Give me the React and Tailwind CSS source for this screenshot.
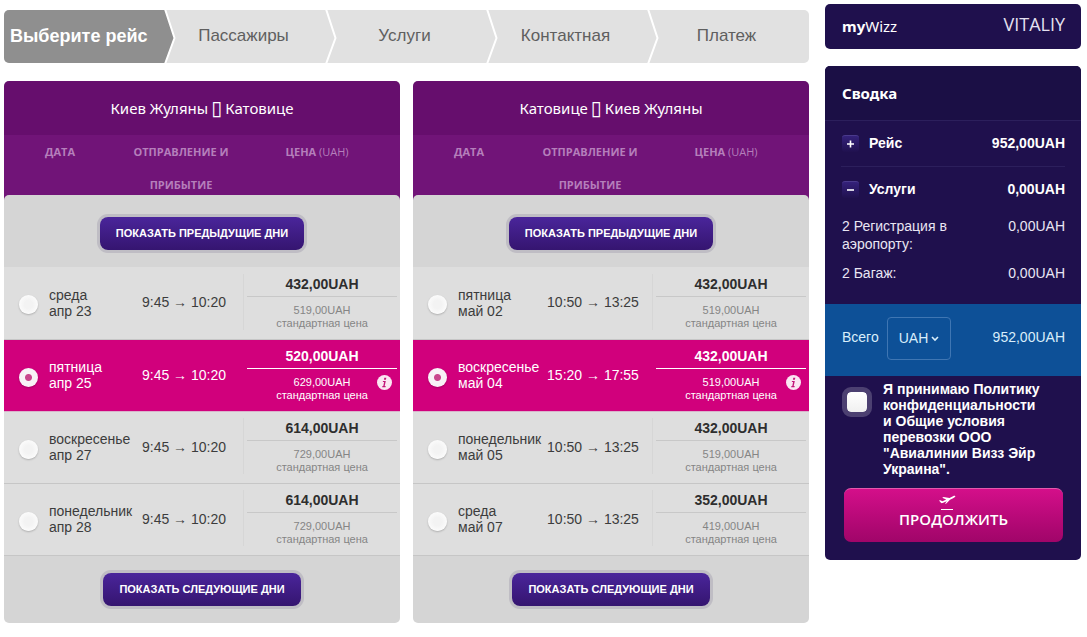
import React, { useState } from "react";

const steps = ["Пассажиры", "Услуги", "Контактная", "Платеж"];

const outbound = {
  id: "outbound",
  from: "Киев Жуляны",
  to: "Катовице",
  flights: [
    { day: "среда", date: "апр 23", time: "9:45 → 10:20", price: "432,00UAH", standard: "519,00UAH" },
    { day: "пятница", date: "апр 25", time: "9:45 → 10:20", price: "520,00UAH", standard: "629,00UAH" },
    { day: "воскресенье", date: "апр 27", time: "9:45 → 10:20", price: "614,00UAH", standard: "729,00UAH" },
    { day: "понедельник", date: "апр 28", time: "9:45 → 10:20", price: "614,00UAH", standard: "729,00UAH" },
  ],
};

const inbound = {
  id: "inbound",
  from: "Катовице",
  to: "Киев Жуляны",
  flights: [
    { day: "пятница", date: "май 02", time: "10:50 → 13:25", price: "432,00UAH", standard: "519,00UAH" },
    { day: "воскресенье", date: "май 04", time: "15:20 → 17:55", price: "432,00UAH", standard: "519,00UAH" },
    { day: "понедельник", date: "май 05", time: "10:50 → 13:25", price: "432,00UAH", standard: "519,00UAH" },
    { day: "среда", date: "май 07", time: "10:50 → 13:25", price: "352,00UAH", standard: "419,00UAH" },
  ],
};

function Chevron({ fill }) {
  return (
    <svg className="absolute top-0 left-full z-10 h-full w-3" viewBox="0 0 12 53" preserveAspectRatio="none" overflow="visible" aria-hidden="true">
      <path d="M-1 0 L0 0 L9.5 28 L0 53 L-1 53 Z" fill={fill} />
      <path d="M0 -1 L9.5 28 L0 54" fill="none" stroke="#fff" strokeWidth="2" />
    </svg>
  );
}

function Steps() {
  return (
    <ol className="grid grid-cols-5 overflow-hidden rounded-[5px] bg-[#e1e1e1] text-[17px] leading-[52px] text-[#5f5f5f]">
      <li aria-current="step" className="relative h-[53px] bg-[#8f8f8f] pl-[6px] text-[18px] font-bold whitespace-nowrap text-white">
        Выберите рейс
        <Chevron fill="#8f8f8f" />
      </li>
      {steps.map((s, i) => (
        <li key={s} className="relative pr-1 text-center">
          {s}
          {i < steps.length - 1 && <Chevron fill="#e1e1e1" />}
        </li>
      ))}
    </ol>
  );
}

function DaysButton({ children }) {
  return (
    <button
      type="button"
      className="h-[33px] rounded-lg bg-linear-to-b from-[#4a259b] to-[#351570] px-4 text-[11px] font-bold text-white shadow-[0_0_0_3px_#bfbdc4]"
    >
      {children}
    </button>
  );
}

function FlightRow({ flight, group, selected, onSelect }) {
  const id = `${group}-${flight.date.replace(" ", "-")}`;
  return (
    <tr className={selected ? "h-[72px] border-b border-[#d9b3cb] bg-[#d1007c] text-white" : "h-[72px] border-b border-[#c6c6c6] bg-[#dedede] text-[#3c3c3c]"}>
      <td className="pt-1 pl-[15px]">
        <input
          id={id}
          type="radio"
          name={group}
          checked={selected}
          onChange={onSelect}
          className="block size-[19px] appearance-none rounded-full bg-[radial-gradient(circle,#f3f3f3_30%,#fbfbfb_70%)] shadow-[0_1px_2px_#00000038] checked:bg-[radial-gradient(circle,#c9468c_0_3px,#f8f2f6_4px)]"
        />
      </td>
      <td>
        <label htmlFor={id} className="block text-[14px] leading-4 whitespace-nowrap">
          {flight.day}
          <br />
          {flight.date}
        </label>
      </td>
      <td className="text-center text-[14px] whitespace-nowrap">{flight.time}</td>
      <td className="p-0 pb-[2px]">
        <div className={selected ? "relative border-l border-transparent px-[3px] text-center" : "relative border-l border-[#d6d6d6] px-[3px] text-center"}>
          <p className={selected ? "border-b border-white pb-[2px] text-[14px] leading-5 font-bold" : "border-b border-[#c8c8c8] pb-[2px] text-[14px] leading-5 font-bold text-[#2e2e2e]"}>{flight.price}</p>
          <p className={selected ? "pt-[7px] text-[11px] leading-[13px]" : "pt-[7px] text-[11px] leading-[13px] text-[#858585]"}>
            {flight.standard}
            <br />
            стандартная цена
          </p>
          {selected && (
            <button type="button" aria-label="Информация" className="absolute right-2 bottom-[12px] size-[15px] rounded-full bg-[#fbe6f2] text-[#c2187a]">
              <svg viewBox="0 0 15 15" className="size-full" aria-hidden="true">
                <path d="M7.3 2.8h2l-.4 2h-2zM6 6h2.8L7.7 11h1l-.2 1.2H5.2l.2-1.1h.9L7.1 7H5.8z" fill="currentColor" />
              </svg>
            </button>
          )}
        </div>
      </td>
    </tr>
  );
}

function FlightCard({ data }) {
  const [selected, setSelected] = useState(1);
  return (
    <section className="min-w-0 flex-1 overflow-hidden rounded-[5px] bg-[#d5d5d5]">
      <h2 className="flex h-[54px] items-center justify-center gap-[3px] bg-[#660e6d] font-['Noto_Sans','DejaVu_Sans',sans-serif] text-[15px] text-white">
        <span>{data.from}</span>
        <span className="text-[20px] leading-5">▯</span>
        <span>{data.to}</span>
      </h2>
      <table className="w-full table-fixed border-collapse">
        <colgroup>
          <col className="w-[45px]" />
          <col className="w-[76px]" />
          <col />
          <col className="w-[157px]" />
        </colgroup>
        <thead className="bg-[#711478] font-['Open_Sans',sans-serif] text-[11px] leading-[33px] text-[#b57fbb]">
          <tr className="h-[60px] align-top">
            <th colSpan={2} className="pr-[9px] font-bold">ДАТА</th>
            <th className="pr-[6px] font-bold">
              <div className="-mb-[6px]">
                ОТПРАВЛЕНИЕ И<br />ПРИБЫТИЕ
              </div>
            </th>
            <th className="pr-[9px] font-bold">
              ЦЕНА <span className="font-normal">(UAH)</span>
            </th>
          </tr>
        </thead>
        <tbody>
          <tr>
            <td colSpan={4} className="bg-[#711478] p-0">
              <div className="flex h-[72px] items-center justify-center rounded-t-[5px] bg-[#d5d5d5] pt-1">
                <DaysButton>ПОКАЗАТЬ ПРЕДЫДУЩИЕ ДНИ</DaysButton>
              </div>
            </td>
          </tr>
          {data.flights.map((f, i) => (
            <FlightRow key={f.date} flight={f} group={data.id} selected={i === selected} onSelect={() => setSelected(i)} />
          ))}
        </tbody>
      </table>
      <div className="flex h-[67px] items-center justify-center">
        <DaysButton>ПОКАЗАТЬ СЛЕДУЮЩИЕ ДНИ</DaysButton>
      </div>
    </section>
  );
}

function ToggleButton({ open, label }) {
  return (
    <button type="button" aria-label={label} aria-expanded={open} className="size-[17px] rounded-[3px] border-t border-[#4a3a8c] bg-linear-to-b from-[#34217a] to-[#20114f]">
      <svg viewBox="0 0 17 16" className="size-full" aria-hidden="true">
        <path d={open ? "M5 8h7" : "M5 8h7M8.5 4.5v7"} stroke="#fff" strokeWidth="1.6" />
      </svg>
    </button>
  );
}

function Summary() {
  const [accepted, setAccepted] = useState(false);
  return (
    <section className="rounded-[5px] bg-[#1f104d] pb-[18px] text-[14px] text-[#e9e6f3]">
      <h2 className="rounded-t-[5px] border-b border-[#2c1f5c] bg-[#1b0f45] px-[17px] font-['Noto_Sans',sans-serif] text-[15px] leading-[54px] font-bold text-white">Сводка</h2>
      <div className="h-[183px] px-4">
        <div className="flex h-[46px] items-center border-b border-[#2c1f5c] pl-px font-bold text-white">
          <ToggleButton open={false} label="Показать рейс" />
          <span className="ml-[10px] flex-1">Рейс</span>
          <span>952,00UAH</span>
        </div>
        <div className="flex h-[45px] items-center pl-px font-bold text-white">
          <ToggleButton open label="Скрыть услуги" />
          <span className="ml-[10px] flex-1">Услуги</span>
          <span>0,00UAH</span>
        </div>
        <dl className="flex flex-col gap-[11px] pt-[5px] pl-px leading-[18px]">
          <div className="flex justify-between">
            <dt className="w-[120px]">2 Регистрация в аэропорту:</dt>
            <dd>0,00UAH</dd>
          </div>
          <div className="flex justify-between">
            <dt>2 Багаж:</dt>
            <dd>0,00UAH</dd>
          </div>
        </dl>
      </div>
      <div className="flex h-[72px] items-center bg-[#0d5097] pr-4 pl-[17px] text-[#d9eefb]">
        <label htmlFor="currency" className="pb-[6px]">Всего</label>
        <div className="relative ml-2 pb-1">
          <select id="currency" className="block h-[43px] w-16 appearance-none rounded-[4px] border border-[#3f76b3] bg-transparent pl-[11px] text-[14px] text-[#d9eefb]">
            <option>UAH</option>
          </select>
          <svg className="pointer-events-none absolute top-[19px] right-3 h-[6px] w-2" viewBox="0 0 8 6" aria-hidden="true">
            <path d="M1 1l3 3 3-3" fill="none" stroke="#d9eefb" strokeWidth="1.6" />
          </svg>
        </div>
        <span className="ml-auto pb-[6px]">952,00UAH</span>
      </div>
      <div className="flex items-start gap-[11px] pt-[5px] pr-4 pl-[17px]">
        <input
          id="terms"
          type="checkbox"
          checked={accepted}
          onChange={(e) => setAccepted(e.target.checked)}
          className="mt-[6px] size-[30px] shrink-0 appearance-none rounded-[9px] border-[5px] border-[#4c4071] bg-linear-to-b from-white to-[#f0f0f0] bg-clip-padding checked:bg-[#d1007c] checked:bg-none"
        />
        <label htmlFor="terms" className="w-[161px] text-[14px] leading-4 font-bold text-white">
          Я принимаю Политику конфиденциальности и Общие условия перевозки ООО "Авиалинии Визз Эйр Украина".
        </label>
      </div>
      <div className="pt-[11px] pr-[18px] pl-[19px]">
        <button
          type="button"
          className="relative block h-[54px] w-full rounded-[7px] border-t border-[#e259ab] bg-linear-to-b from-[#d40f8a] to-[#a00569] pt-[7px] font-['Open_Sans',sans-serif] text-[15px] font-semibold text-white"
        >
          <svg className="absolute top-[6px] left-1/2 h-4 w-[18px] -translate-x-4" viewBox="0 0 18 16" aria-hidden="true">
            <path d="M1 5.6l1.3-.4 2.2 1 3.700-1.700L4.200 2.800l1.400-.7 5.900 1L15 1.200c1.200-.6 2.600-.6 2.300.2-.3.800-1.500 1.400-2.700 2L12 4.700 8.300 8.500l-1.400.6L8.800 6.200 4.600 8c-.7.300-1.400.2-1.900-.4z" fill="#fff" />
            <path d="M3 14.5h12" stroke="#fff" strokeWidth="1" />
          </svg>
          ПРОДОЛЖИТЬ
        </button>
      </div>
    </section>
  );
}

export default function App() {
  return (
    <div className="flex items-start gap-4 pt-1 pr-[6px] pb-3 pl-1 font-['Liberation_Sans',Arial,sans-serif]">
      <main className="min-w-0 flex-1 pt-[6px]">
        <Steps />
        <div className="mt-[18px] flex gap-[13px]">
          <FlightCard data={outbound} />
          <FlightCard data={inbound} />
        </div>
      </main>
      <aside className="w-64 shrink-0">
        <div className="flex h-[45px] items-center justify-between rounded-[5px] bg-[#1f104d] pr-4 pl-[17px] font-['Noto_Sans',sans-serif] text-white">
          <a href="#mywizz" className="text-[15px]">
            <b>my</b>Wizz
          </a>
          <span className="pb-1 font-['Open_Sans',sans-serif] text-[18px] text-[#e4e0f0]">VITALIY</span>
        </div>
        <div className="mt-[17px]">
          <Summary />
        </div>
      </aside>
    </div>
  );
}
